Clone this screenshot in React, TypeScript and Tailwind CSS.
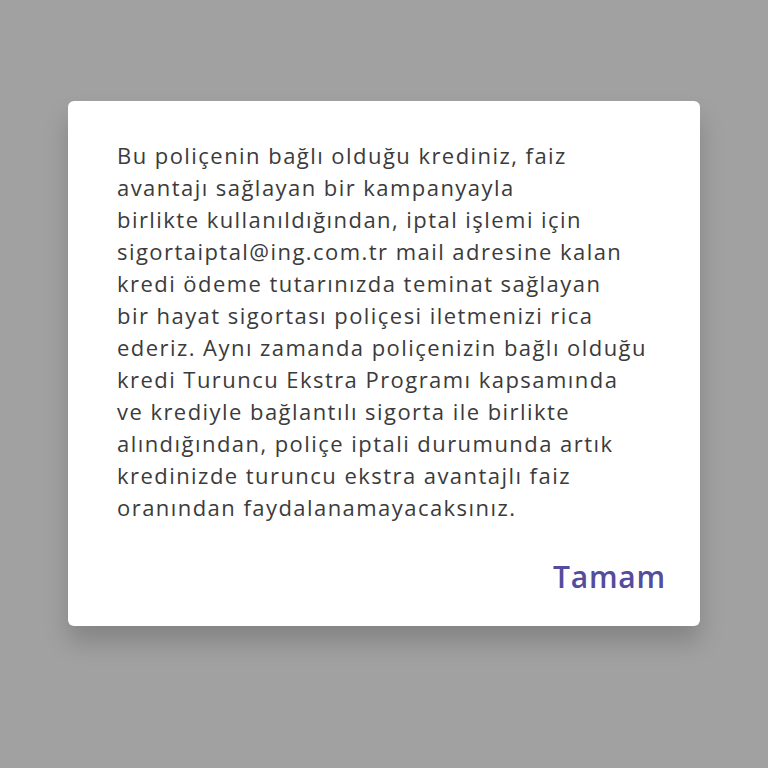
const lines = [
  "Bu poliçenin bağlı olduğu krediniz, faiz",
  "avantajı sağlayan bir kampanyayla",
  "birlikte kullanıldığından, iptal işlemi için",
  "sigortaiptal@ing.com.tr mail adresine kalan",
  "kredi ödeme tutarınızda teminat sağlayan",
  "bir hayat sigortası poliçesi iletmenizi rica",
  "ederiz. Aynı zamanda poliçenizin bağlı olduğu",
  "kredi Turuncu Ekstra Programı kapsamında",
  "ve krediyle bağlantılı sigorta ile birlikte",
  "alındığından, poliçe iptali durumunda artık",
  "kredinizde turuncu ekstra avantajlı faiz",
  "oranından faydalanamayacaksınız.",
];

export default function App() {
  return (
    <div
      className="w-[768px] h-[768px] bg-[#a1a1a1] pt-[101px] pl-[68px]"
      style={{ fontFamily: '"Open Sans", "Noto Sans", sans-serif' }}
    >
      <div className="w-[632px] h-[525px] bg-white rounded-[6px] shadow-[0_16px_24px_rgba(0,0,0,0.18)] pt-[38px] pl-[49px] pr-[34px] flex flex-col">
        <div className="text-[22px] leading-[32px] tracking-[1.45px] text-[#3b3b3b] whitespace-nowrap">
          {lines.map((l, i) => (
            <div key={i}>{l}</div>
          ))}
        </div>
        <div className="flex justify-end mt-[34px]">
          <button className="text-[30px] leading-[40px] font-semibold tracking-[0.8px] text-[#544c9d]">
            Tamam
          </button>
        </div>
      </div>
    </div>
  );
}
